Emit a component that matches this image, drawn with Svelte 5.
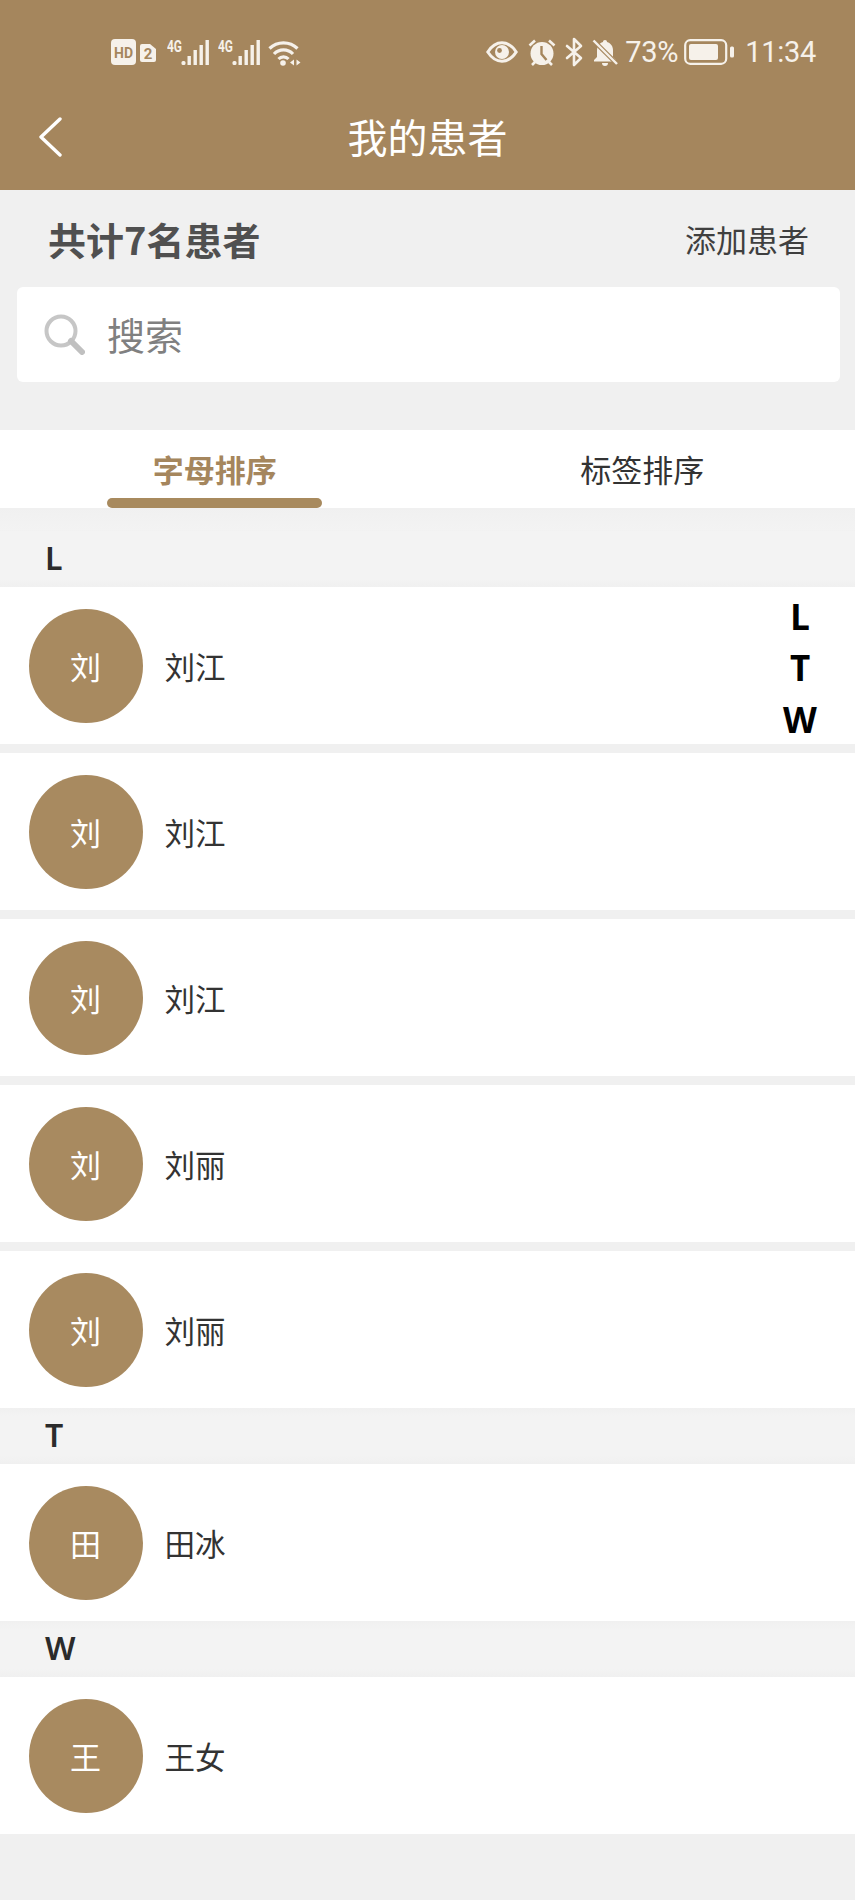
<script lang="ts">
	const sections = [
		{ letter: 'L', patients: ['刘江', '刘江', '刘江', '刘丽', '刘丽'] },
		{ letter: 'T', patients: ['田冰'] },
		{ letter: 'W', patients: ['王女'] },
	];
	const index = ['L', 'T', 'W'];
</script>

<div class="page">
	<header class="header">
		<div class="status">
			<div class="status-group">
				<svg class="ic-hd" viewBox="0 0 25 26">
					<rect width="25" height="26" rx="4" />
					<text x="12.500" y="18.500" text-anchor="middle" textLength="19" lengthAdjust="spacingAndGlyphs" class="hd-text">HD</text>
				</svg>
				<svg class="ic-sim" viewBox="0 0 16 18">
					<path d="M2 0h8l6 5v11a2 2 0 0 1-2 2H2a2 2 0 0 1-2-2V2a2 2 0 0 1 2-2z" fill="#f6f1ea" />
					<text x="8" y="15" text-anchor="middle" class="sim-text">2</text>
				</svg>
				{#each [0, 1] as i (i)}
					<svg class="ic-signal" viewBox="0 -4 43 31">
						<text x="0" y="13" textLength="15" lengthAdjust="spacingAndGlyphs" class="net-text">4G</text>
						<rect x="14.500" y="22" width="4" height="4" rx="1.500" />
						<rect x="20.500" y="17" width="3.400" height="9" />
						<rect x="26.500" y="11" width="3.400" height="15" />
						<rect x="32.500" y="6" width="3.400" height="20" />
						<rect x="38.500" y="1" width="3.400" height="25" />
					</svg>
				{/each}
				<svg class="ic-wifi" viewBox="0 0 33 27">
					<g fill="none" stroke="#f6f1ea" stroke-width="3.200">
						<path d="M1.500 9.500a20 20 0 0 1 28 0" />
						<path d="M6 15a13 13 0 0 1 19 0" />
						<path d="M10.500 20a7 7 0 0 1 10 0" />
					</g>
					<circle cx="15" cy="24" r="2.800" fill="#f6f1ea" />
					<path d="M26 20.500v6l-4-3zM28.500 20.500l4 3-4 3z" fill="#f6f1ea" />
				</svg>
			</div>
			<div class="status-group right">
				<svg class="ic-eye" viewBox="0 0 32 22">
					<path d="M1.800 11C6 4.500 11 1.800 16 1.800s10 2.700 14.200 9.200C26 17.500 21 20.200 16 20.200S6 17.500 1.800 11z" fill="none" stroke="#f6f1ea" stroke-width="3" />
					<circle cx="16" cy="11" r="7" fill="#f6f1ea" />
					<circle cx="13.500" cy="9.500" r="2.400" fill="#a5865d" />
				</svg>
				<svg class="ic-alarm" viewBox="0 0 28 27">
					<circle cx="14" cy="14.500" r="11.500" fill="#f6f1ea" />
					<path d="M13.500 7v8l5 6" fill="none" stroke="#a5865d" stroke-width="2.400" />
					<path d="M1.500 6.500l5.500-5M26.500 6.500l-5.500-5M4 26l3-3M24 26l-3-3" stroke="#f6f1ea" stroke-width="2.600" fill="none" />
				</svg>
				<svg class="ic-bt" viewBox="0 0 18 30">
					<path d="M2 9l14 12-7 7V2l7 7L2 21" fill="none" stroke="#f6f1ea" stroke-width="2.600" stroke-linejoin="round" stroke-linecap="round" />
				</svg>
				<svg class="ic-bell" viewBox="0 0 26 27">
					<path d="M13 1c1.300 0 2 .8 2 2 4 1.200 6 4.500 6 8.500V18l3 3v1.500H2V21l3-3v-6.500C5 7.500 7 4.200 11 3c0-1.200.7-2 2-2zM10 24h6a3 3 0 0 1-6 0z" fill="#f6f1ea" />
					<path d="M0 0l26 26" stroke="#a5865d" stroke-width="4.500" />
					<path d="M1.500 1.500l23.500 23.500" stroke="#f6f1ea" stroke-width="2.400" />
				</svg>
				<span class="status-text pct">73%</span>
				<svg class="ic-battery" viewBox="0 0 50 26">
					<rect x="1.200" y="1.200" width="41" height="23.600" rx="5" fill="none" stroke="#f6f1ea" stroke-width="2.200" />
					<rect x="5" y="5" width="29" height="16" rx="2" />
					<rect x="46" y="7.500" width="4" height="11" rx="1.500" />
				</svg>
				<span class="status-text time">11:34</span>
			</div>
		</div>
		<div class="nav">
			<svg class="back" viewBox="0 0 24 40">
				<path d="M22 2L3 20l19 18" fill="none" stroke="#fff" stroke-width="3.400" stroke-linecap="round" stroke-linejoin="round" />
			</svg>
			<h1 class="title">我的患者</h1>
		</div>
	</header>

	<div class="summary">
		<span class="count">共计7名患者</span>
		<span class="add">添加患者</span>
	</div>

	<div class="search">
		<svg class="search-icon" viewBox="0 0 41 41">
			<circle cx="17" cy="17" r="14.500" fill="none" stroke="#c6c6c6" stroke-width="4" />
			<path d="M27 27l11 11" stroke="#c0c0c0" stroke-width="6" stroke-linecap="round" />
		</svg>
		<span class="placeholder">搜索</span>
	</div>

	<div class="tabs">
		<div class="tab active">字母排序</div>
		<div class="tab">标签排序</div>
	</div>

	<div class="list">
		{#each sections as section (section.letter)}
			<div class="section-head">{section.letter}</div>
			{#each section.patients as name, i (i)}
				<div class="row">
					<div class="avatar">{name[0]}</div>
					<span class="name">{name}</span>
				</div>
			{/each}
		{/each}

		<div class="index">
			{#each index as letter (letter)}
				<span>{letter}</span>
			{/each}
		</div>
	</div>
</div>

<style>
	:global(body) {
		background: #f0f0f0;
	}

	.page {
		min-height: 1900px;
		background: #f0f0f0;
		font-family: "Noto Sans CJK SC", "Noto Sans", sans-serif;
		color: #333;
	}

	.header {
		height: 190px;
		background: #a5865d;
	}

	.status {
		height: 104px;
		padding: 0 39px 0 111px;
		box-sizing: border-box;
		display: flex;
		align-items: center;
		justify-content: space-between;
	}

	.status-group {
		display: flex;
		align-items: center;
		height: 28px;
	}

	.status-group svg {
		display: block;
		flex: none;
	}

	.status-group svg rect {
		fill: #f6f1ea;
	}

	.status-group .ic-battery rect:first-child {
		fill: none;
	}

	.ic-hd {
		width: 25px;
		height: 26px;
		margin-right: 4px;
	}

	.ic-sim {
		width: 16px;
		height: 18px;
		margin-right: 11px;
		margin-top: 2px;
	}

	.ic-signal {
		width: 43px;
		height: 31px;
		margin-top: -4px;
		margin-right: 8px;
	}

	.ic-wifi {
		width: 33px;
		height: 27px;
		margin-left: -1px;
	}

	.ic-eye {
		width: 32px;
		height: 22px;
		margin-right: 10px;
	}

	.ic-alarm {
		width: 28px;
		height: 27px;
		margin-right: 9px;
	}

	.ic-bt {
		width: 18px;
		height: 30px;
		margin-right: 9px;
	}

	.ic-bell {
		width: 26px;
		height: 27px;
		margin-right: 7px;
	}

	.ic-battery {
		width: 50px;
		height: 26px;
		margin-right: 11px;
	}

	.hd-text,
	.sim-text,
	.net-text {
		font-family: "Roboto", sans-serif;
		font-weight: 700;
	}

	.hd-text {
		font-size: 15px;
		fill: #a5865d;
	}

	.sim-text {
		font-size: 15px;
		fill: #a5865d;
	}

	.net-text {
		font-size: 17px;
		fill: #f6f1ea;
	}

	.status-text {
		font-family: "Roboto", sans-serif;
		font-size: 29px;
		font-weight: 400;
		letter-spacing: -0.3px;
		color: #f6f1ea;
		line-height: 28px;
	}

	.pct {
		margin-right: 6px;
	}

	.nav {
		height: 86px;
		padding: 0 39px;
		position: relative;
		display: flex;
		align-items: center;
		justify-content: center;
	}

	.back {
		position: absolute;
		left: 38px;
		top: 13px;
		width: 24px;
		height: 40px;
	}

	.title {
		margin: 0;
		font-size: 40px;
		font-weight: 400;
		color: #fff;
		line-height: 56px;
		transform: translateY(-11px);
	}

	.summary {
		height: 97px;
		padding: 0 46px 0 48px;
		display: flex;
		align-items: center;
		justify-content: space-between;
	}

	.count {
		font-size: 38px;
		font-weight: 700;
		color: #505050;
	}

	.add {
		font-size: 31px;
		color: #3f3f3f;
	}

	.search {
		margin: 0 15px 0 17px;
		height: 95px;
		background: #fff;
		border-radius: 6px;
		display: flex;
		align-items: center;
		padding-left: 27px;
	}

	.search-icon {
		width: 41px;
		height: 41px;
		margin-right: 22px;
		flex: none;
	}

	.placeholder {
		font-size: 38px;
		color: #808080;
		transform: translateY(-1px);
	}

	.tabs {
		margin-top: 48px;
		height: 78px;
		background: #fff;
		display: grid;
		grid-template-columns: 1fr 1fr;
	}

	.tab {
		display: flex;
		align-items: center;
		justify-content: center;
		font-size: 31px;
		color: #333;
		height: 100%;
		padding: 0 0 2px 2px;
		box-sizing: border-box;
		position: relative;
	}

	.tab.active {
		color: #a5865d;
		font-weight: 700;
	}

	.tab.active::after {
		content: '';
		position: absolute;
		left: 107px;
		width: 215px;
		bottom: 0;
		height: 10px;
		border-radius: 5px;
		background: #a88a5e;
	}

	.list {
		position: relative;
		padding-top: 22.500px;
		background: linear-gradient(#f0f0f0, #f3f3f3) 0 0 / 100% 22.500px no-repeat;
	}

	.section-head {
		height: 56.500px;
		line-height: 54px;
		padding-left: 45px;
		background: linear-gradient(#f0f0f0, #f3f3f3 15%, #f3f3f3 85%, #f0f0f0);
		font-family: "Noto Sans", sans-serif;
		font-size: 32px;
		font-weight: 600;
		color: #2b2b2b;
	}

	.section-head:first-child {
		background: linear-gradient(#f3f3f3 85%, #f0f0f0);
	}

	.row {
		height: 156.500px;
		box-sizing: border-box;
		padding-top: 1px;
		background: #fff;
		display: flex;
		align-items: center;
		padding-left: 28.500px;
	}

	.row + .row {
		margin-top: 9.500px;
	}

	.avatar {
		width: 114px;
		height: 114px;
		border-radius: 50%;
		background: #a88a60;
		color: #fff;
		font-size: 31px;
		display: flex;
		align-items: center;
		justify-content: center;
		flex: none;
	}

	.name {
		margin-left: 22px;
		font-size: 30.500px;
		color: #333;
	}

	.index {
		position: absolute;
		top: 82.500px;
		right: 30px;
		width: 50px;
		display: flex;
		flex-direction: column;
		align-items: center;
		font-family: "Noto Sans", sans-serif;
		font-size: 35px;
		font-weight: 700;
		line-height: 51.500px;
		color: #000;
	}
</style>
